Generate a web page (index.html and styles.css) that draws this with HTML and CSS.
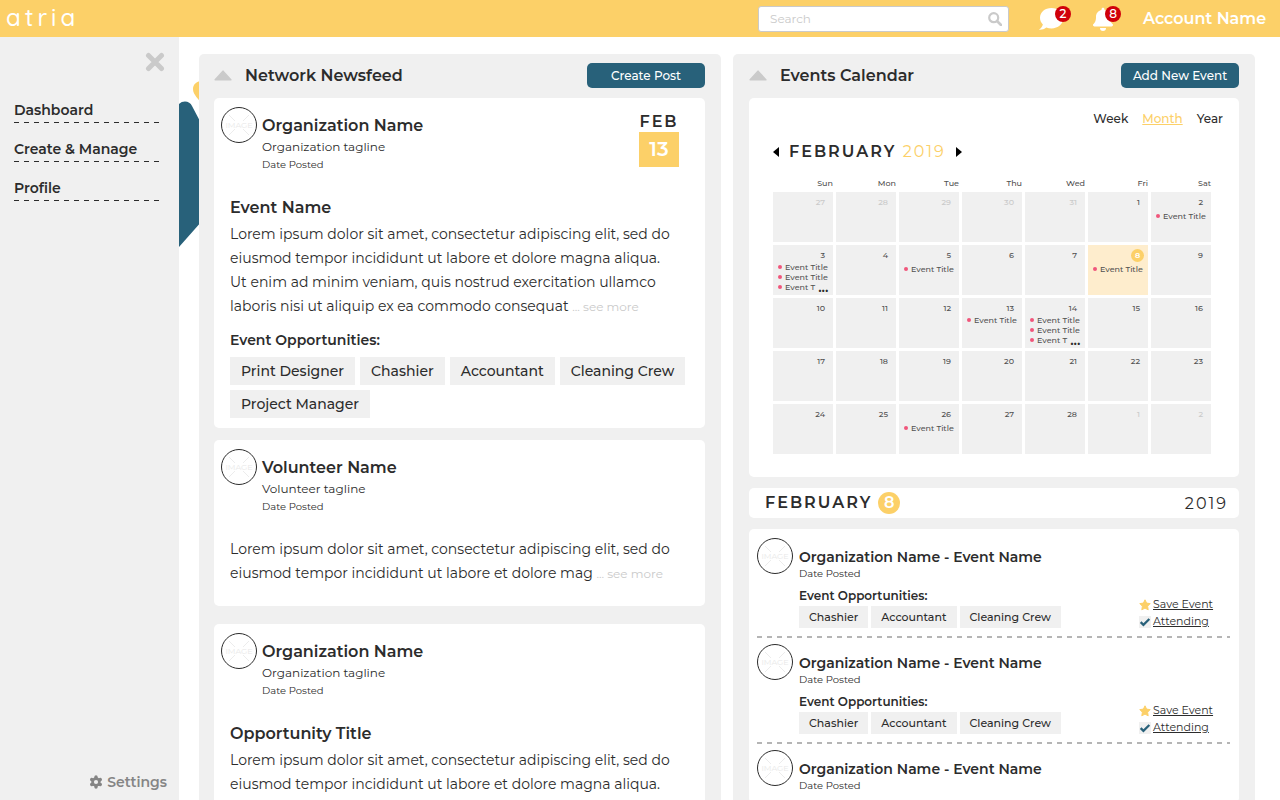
FILE: index.html
```html
<!DOCTYPE html>
<html lang="en">
<head>
<meta charset="utf-8">
<meta name="viewport" content="width=device-width, initial-scale=1">
<title>atria</title>
<link rel="stylesheet" href="styles.css">
</head>
<body>
<svg class="defs" aria-hidden="true">
  <symbol id="cross" viewBox="0 0 34 34"><path d="M7 7l6 6M27 7l-6 6M7 27l6-6M27 27l-6-6" stroke="#ececec"/></symbol>
  <symbol id="star" viewBox="0 0 12 12"><path d="M6 .8l1.6 3.300 3.600.5-2.600 2.600.6 3.600L6 9.100l-3.200 1.700.6-3.600L.8 4.600l3.600-.5z" fill="#fcd068" stroke="#fcd068" stroke-linejoin="round"/></symbol>
  <symbol id="check" viewBox="0 0 13 13"><path d="M0 0h13v13H0z" fill="#f0f0f0"/><path d="M1.800 6.600l3 3L11.200 3.200" fill="none" stroke="#28617a" stroke-width="2.400"/></symbol>
  <symbol id="triangle" viewBox="0 0 18 11"><path d="M9 1.200L16.800 9.800H1.200z" fill="#cacaca" stroke="#cacaca" stroke-width="1.600" stroke-linejoin="round"/></symbol>
</svg>

<header class="topbar">
  <a class="logo" href="#">atria</a>
  <form class="search">
    <input type="search" placeholder="Search" aria-label="Search">
    <button type="submit" aria-label="Submit search">
      <svg width="14" height="14" viewBox="0 0 14 14"><circle cx="5.700" cy="5.700" r="4.500" fill="none" stroke="#cacaca" stroke-width="2.200"/><path d="M9 9l4 4" stroke="#cacaca" stroke-width="2.600" stroke-linecap="round"/></svg>
    </button>
  </form>
  <button class="notice" aria-label="Messages">
    <svg width="26" height="24" viewBox="0 0 26 24"><path d="M13.500 1C7 1 2 5.200 2 10.800c0 2.600 1.100 4.900 2.900 6.700C4.300 19.700 2.800 21.600.9 22.700c2.600.2 5.300-.4 7.400-2.200 1.600.6 3.400.9 5.200.9C20 21.400 25.200 17 25.200 11S20 1 13.500 1z" fill="#fff"/></svg>
    <span class="badge">2</span>
  </button>
  <button class="notice" aria-label="Notifications">
    <svg width="22" height="24" viewBox="0 0 22 24"><path d="M11 .8c-.9 0-1.500.7-1.500 1.500v.8C6.200 3.800 4 6.500 4 9.900c0 4.200-1.300 5.900-2.600 7.200-.9 1-.3 2.300.9 2.300h17.400c1.200 0 1.800-1.300.9-2.300-1.300-1.300-2.600-3-2.600-7.200 0-3.400-2.200-6.100-5.500-6.800v-.8c0-.8-.6-1.500-1.500-1.500zM8 20.900a3 3 0 0 0 6 0z" fill="#fff"/></svg>
    <span class="badge">8</span>
  </button>
  <a class="account" href="#">Account Name</a>
</header>

<div class="layout">
  <nav class="sidebar">
    <button class="close" aria-label="Close menu">
      <svg width="20" height="20" viewBox="0 0 20 20"><path d="M3.500 3.500l13 13M16.500 3.500l-13 13" stroke="#cacaca" stroke-width="5" stroke-linecap="round"/></svg>
    </button>
    <a class="nav-link" href="#">Dashboard</a>
    <a class="nav-link" href="#">Create &amp; Manage</a>
    <a class="nav-link" href="#">Profile</a>
    <a class="settings" href="#">
      <svg width="14" height="14" viewBox="0 0 14 14"><path d="M7 2v10M2.700 4.500l8.600 5M2.700 9.500l8.600-5" stroke="#858585" stroke-width="3.400" stroke-linecap="round"/><circle cx="7" cy="7" r="4.700" fill="#858585"/><circle cx="7" cy="7" r="2.100" fill="#f0f0f0"/></svg>
      Settings
    </a>
  </nav>

  <main class="main">
    <svg class="backdrop" width="40" height="180" viewBox="0 0 40 180" aria-hidden="true">
      <path d="M23 1c-5 0-9 3-9 8 0 6 6 10 9 15h17V1z" fill="#fcd068"/>
      <path d="M0 24c4-4 11-3 13 2l10 19v96L0 167z" fill="#28617a"/>
    </svg>

    <section class="panel">
      <header class="panel-head">
        <svg width="18" height="11"><use href="#triangle"/></svg>
        <h2>Network Newsfeed</h2>
        <button class="action">Create Post</button>
      </header>

      <article class="card post">
        <div class="post-head">
          <div class="avatar"><svg width="34" height="34"><use href="#cross"/></svg><span>IMAGE</span></div>
          <div class="who">
            <h3>Organization Name</h3>
            <p class="tagline">Organization tagline</p>
            <p class="posted">Date Posted</p>
          </div>
          <div class="date"><span class="date-month">FEB</span><span class="date-day">13</span></div>
        </div>
        <div class="post-body">
          <h4>Event Name</h4>
          <p>Lorem ipsum dolor sit amet, consectetur adipiscing elit, sed do<br>eiusmod tempor incididunt ut labore et dolore magna aliqua.<br>Ut enim ad minim veniam, quis nostrud exercitation ullamco<br>laboris nisi ut aliquip ex ea commodo consequat <a class="more" href="#">... see more</a></p>
          <h5>Event Opportunities:</h5>
          <ul class="tags">
            <li>Print Designer</li><li>Chashier</li><li>Accountant</li><li>Cleaning Crew</li><li>Project Manager</li>
          </ul>
        </div>
      </article>

      <article class="card post post-short">
        <div class="post-head">
          <div class="avatar"><svg width="34" height="34"><use href="#cross"/></svg><span>IMAGE</span></div>
          <div class="who">
            <h3>Volunteer Name</h3>
            <p class="tagline">Volunteer tagline</p>
            <p class="posted">Date Posted</p>
          </div>
        </div>
        <div class="post-body">
          <p>Lorem ipsum dolor sit amet, consectetur adipiscing elit, sed do<br>eiusmod tempor incididunt ut labore et dolore mag <a class="more" href="#">... see more</a></p>
        </div>
      </article>

      <article class="card post">
        <div class="post-head">
          <div class="avatar"><svg width="34" height="34"><use href="#cross"/></svg><span>IMAGE</span></div>
          <div class="who">
            <h3>Organization Name</h3>
            <p class="tagline">Organization tagline</p>
            <p class="posted">Date Posted</p>
          </div>
        </div>
        <div class="post-body">
          <h4>Opportunity Title</h4>
          <p>Lorem ipsum dolor sit amet, consectetur adipiscing elit, sed do<br>eiusmod tempor incididunt ut labore et dolore magna aliqua.</p>
        </div>
      </article>
    </section>

    <section class="panel">
      <header class="panel-head">
        <svg width="18" height="11"><use href="#triangle"/></svg>
        <h2>Events Calendar</h2>
        <button class="action">Add New Event</button>
      </header>

      <div class="card calendar">
        <div class="views">
          <button>Week</button><button class="current">Month</button><button>Year</button>
        </div>
        <div class="month">
          <button aria-label="Previous month"><svg width="6" height="10" viewBox="0 0 6 10"><path d="M6 0v10L0 5z"/></svg></button>
          <h3>FEBRUARY <span>2019</span></h3>
          <button aria-label="Next month"><svg width="6" height="10" viewBox="0 0 6 10"><path d="M0 0v10l6-5z"/></svg></button>
        </div>
        <table>
          <thead><tr><th>Sun</th><th>Mon</th><th>Tue</th><th>Thu</th><th>Wed</th><th>Fri</th><th>Sat</th></tr></thead>
          <tbody>
            <tr>
              <td class="other"><span class="num">27</span></td><td class="other"><span class="num">28</span></td><td class="other"><span class="num">29</span></td><td class="other"><span class="num">30</span></td><td class="other"><span class="num">31</span></td>
              <td><span class="num">1</span></td>
              <td><span class="num">2</span><ul><li>Event Title</li></ul></td>
            </tr>
            <tr>
              <td><span class="num">3</span><ul class="tight"><li>Event Title</li><li>Event Title</li><li>Event T<b>...</b></li></ul></td>
              <td><span class="num">4</span></td>
              <td><span class="num">5</span><ul><li>Event Title</li></ul></td>
              <td><span class="num">6</span></td><td><span class="num">7</span></td>
              <td class="today"><span class="num">8</span><ul><li>Event Title</li></ul></td>
              <td><span class="num">9</span></td>
            </tr>
            <tr>
              <td><span class="num">10</span></td><td><span class="num">11</span></td><td><span class="num">12</span></td>
              <td><span class="num">13</span><ul class="tight"><li>Event Title</li></ul></td>
              <td><span class="num">14</span><ul class="tight"><li>Event Title</li><li>Event Title</li><li>Event T<b>...</b></li></ul></td>
              <td><span class="num">15</span></td><td><span class="num">16</span></td>
            </tr>
            <tr>
              <td><span class="num">17</span></td><td><span class="num">18</span></td><td><span class="num">19</span></td><td><span class="num">20</span></td><td><span class="num">21</span></td><td><span class="num">22</span></td><td><span class="num">23</span></td>
            </tr>
            <tr>
              <td><span class="num">24</span></td><td><span class="num">25</span></td>
              <td><span class="num">26</span><ul><li>Event Title</li></ul></td>
              <td><span class="num">27</span></td><td><span class="num">28</span></td>
              <td class="other"><span class="num">1</span></td><td class="other"><span class="num">2</span></td>
            </tr>
          </tbody>
        </table>
      </div>

      <div class="card daybar">
        <h3>FEBRUARY</h3><span class="day">8</span><span class="year">2019</span>
      </div>

      <div class="card events">
        <article class="event">
          <div class="avatar"><svg width="34" height="34"><use href="#cross"/></svg><span>IMAGE</span></div>
          <div class="event-info">
            <h4>Organization Name - Event Name</h4>
            <p class="posted">Date Posted</p>
            <h5>Event Opportunities:</h5>
            <ul class="tags tags-small"><li>Chashier</li><li>Accountant</li><li>Cleaning Crew</li></ul>
          </div>
          <div class="event-links">
            <a href="#"><svg width="12" height="12"><use href="#star"/></svg><span>Save Event</span></a>
            <a href="#"><svg width="12" height="12"><use href="#check"/></svg><span>Attending</span></a>
          </div>
        </article>
        <article class="event">
          <div class="avatar"><svg width="34" height="34"><use href="#cross"/></svg><span>IMAGE</span></div>
          <div class="event-info">
            <h4>Organization Name - Event Name</h4>
            <p class="posted">Date Posted</p>
            <h5>Event Opportunities:</h5>
            <ul class="tags tags-small"><li>Chashier</li><li>Accountant</li><li>Cleaning Crew</li></ul>
          </div>
          <div class="event-links">
            <a href="#"><svg width="12" height="12"><use href="#star"/></svg><span>Save Event</span></a>
            <a href="#"><svg width="12" height="12"><use href="#check"/></svg><span>Attending</span></a>
          </div>
        </article>
        <article class="event">
          <div class="avatar"><svg width="34" height="34"><use href="#cross"/></svg><span>IMAGE</span></div>
          <div class="event-info">
            <h4>Organization Name - Event Name</h4>
            <p class="posted">Date Posted</p>
          </div>
        </article>
      </div>
    </section>
  </main>
</div>
</body>
</html>
```
FILE: styles.css
```css
* { box-sizing: border-box; }
h2, h3, h4, h5, p, ul { margin: 0; padding: 0; font-weight: 600; }
p, ul { font-weight: 400; }
ul { list-style: none; }
a { color: inherit; text-decoration: none; }
button { border: 0; padding: 0; background: none; color: inherit; font: inherit; cursor: pointer; }
svg { display: block; flex: none; }

body {
  margin: 0;
  height: 100vh;
  display: flex;
  flex-direction: column;
  overflow: hidden;
  background: #fff;
  color: #2c2c2c;
  font-family: Montserrat, Inter, "Open Sans", sans-serif;
}
.defs { position: absolute; width: 0; height: 0; }
.avatar {
  flex: none;
  display: grid;
  place-items: center;
  width: 36px;
  height: 36px;
  border: 1px solid #2c2c2c;
  border-radius: 50%;
  color: #e8e8e8;
  font-size: 8px;
  line-height: 10px;
}
.avatar > * { grid-area: 1 / 1; }

/* Top bar */
.topbar {
  flex: none;
  display: flex;
  align-items: center;
  height: 37px;
  padding: 0 11px 0 6px;
  background: #fcd068;
  color: #fff;
}
.logo { padding-bottom: 3px; font: 500 24px/32px Quicksand, Lato, sans-serif; letter-spacing: 4px; }
.search {
  display: flex;
  align-items: center;
  width: 251px;
  height: 26px;
  margin: 0 29px 0 auto;
  padding: 0 6px 0 11px;
  border: 1px solid #cacaca;
  border-radius: 3px;
  background: #fff;
}
.search input {
  flex: 1;
  min-width: 0;
  border: 0;
  padding: 0;
  outline: 0;
  background: none;
  font: 400 12px/20px Montserrat, Inter, sans-serif;
}
.search input::placeholder { color: #cacaca; }
.notice { position: relative; margin-right: 28px; }
.notice + .notice { margin-right: 29px; }
.badge {
  position: absolute;
  top: -1px;
  right: -7px;
  width: 16px;
  height: 16px;
  border-radius: 50%;
  background: #d0000a;
  font-size: 12px;
  font-weight: 500;
  line-height: 16px;
  text-align: center;
}
.account { min-width: 126px; font-size: 16px; font-weight: 600; }

/* Sidebar */
.layout { flex: 1; min-height: 0; display: flex; }
.sidebar {
  flex: none;
  display: flex;
  flex-direction: column;
  width: 179px;
  padding: 15px 12px 8px 14px;
  background: #f0f0f0;
}
.close { align-self: flex-end; margin: 0 2px 28px 0; }
.nav-link {
  height: 23px;
  margin: 0 7px 16px 0;
  background: repeating-linear-gradient(90deg, #2c2c2c 0 5px, transparent 5px 10px) left bottom / 100% 1px no-repeat;
  font-size: 14px;
  font-weight: 600;
  line-height: 20px;
}
.settings {
  display: flex;
  align-items: center;
  justify-content: flex-end;
  gap: 4px;
  margin-top: auto;
  color: #858585;
  font-size: 14px;
  font-weight: 600;
  line-height: 20px;
}

/* Panels */
.main {
  position: relative;
  z-index: 0;
  flex: 1;
  min-width: 0;
  display: grid;
  grid-template-columns: 1fr 1fr;
  gap: 12px;
  padding: 17px 25px 0 20px;
}
.backdrop { position: absolute; left: 0; top: 43px; z-index: -1; }
.panel {
  display: flex;
  flex-direction: column;
  min-width: 0;
  overflow: hidden;
  padding: 0 16px 0 15px;
  border-radius: 5px 5px 0 0;
  background: #f0f0f0;
}
.panel + .panel { padding-left: 16px; }
.panel-head { flex: none; display: flex; align-items: center; gap: 13px; height: 44px; padding-bottom: 1px; }
.panel-head h2 { font-size: 16px; line-height: 24px; }
.action {
  width: 118px;
  height: 25px;
  margin-left: auto;
  border-radius: 5px;
  background: #28617a;
  color: #fff;
  font-size: 12px;
  font-weight: 500;
}
.card { flex: none; border-radius: 5px; background: #fff; }

/* Newsfeed */
.post { margin-bottom: 12px; padding: 9px 16px 10px 7px; }
.post-short { margin-bottom: 18px; padding-bottom: 21px; }
.post-head { display: flex; gap: 5px; }
.who { flex: 1; padding-top: 8px; }
.who h3 { font-size: 16px; line-height: 22px; }
.tagline { font-size: 12px; line-height: 20px; }
.posted { font-size: 10px; line-height: 14px; }
.who .posted { padding-top: 1px; }
.date { width: 40px; margin: 5px 10px 0 0; text-align: center; }
.date span { display: block; font-weight: 600; }
.date-month { font-size: 16px; line-height: 20px; letter-spacing: 2px; }
.date-day { background: #fcd068; color: #fff; font-size: 20px; line-height: 35px; }
.post-body { margin-top: 23px; padding-left: 9px; }
.post-body h4 { padding-top: 1px; margin-bottom: 2px; font-size: 16px; line-height: 24px; }
.post-body p { font-size: 14px; line-height: 24px; white-space: nowrap; }
.post-body h5 { margin: 12px 0 7px; font-size: 14px; line-height: 20px; }
.more { color: #cacaca; font-size: 12px; line-height: 16px; }
.tags { display: flex; flex-wrap: wrap; gap: 5px; }
.tags li { padding: 0 11px; background: #f0f0f0; font-size: 14px; font-weight: 500; line-height: 28px; }

/* Calendar */
.calendar { margin-bottom: 11px; padding: 13px 16px 20px 21px; }
.views { display: flex; justify-content: flex-end; gap: 14px; font-size: 12px; font-weight: 500; line-height: 16px; }
.current { color: #fcd068; text-decoration: underline; }
.month { display: flex; align-items: center; gap: 10px; margin: 13px 0 11px 3px; }
.month h3 { font-size: 16px; line-height: 24px; letter-spacing: 2px; }
.month span { color: #fcd068; font-weight: 400; }
.calendar table {
  width: calc(100% - 9px);
  table-layout: fixed;
  border-collapse: separate;
  border-spacing: 3px;
  color: #505050;
  font-size: 8px;
}
.calendar th { height: 11px; padding: 0; font-weight: 500; line-height: 11px; text-align: right; }
.calendar td { height: 50px; padding: 4px 4px 0 5px; background: #f0f0f0; vertical-align: top; }
.num { display: block; width: fit-content; height: 13px; margin: 0 4px 0 auto; font-size: 8px; font-weight: 500; line-height: 13px; text-align: center; }
.calendar .other { color: #cacaca; }
.calendar td.today { background: #feedcd; }
.today .num { width: 13px; margin-right: 0; border-radius: 50%; background: #fcd068; color: #fff; font-weight: 600; }
.calendar ul { margin-top: 2px; }
.calendar ul.tight { margin-top: 0; }
.calendar li { display: flex; align-items: center; gap: 3px; height: 10px; font-weight: 500; line-height: 10px; white-space: nowrap; }
.calendar li::before { content: ""; width: 4px; height: 4px; border-radius: 50%; background: #f0567b; }
.calendar b { color: #2c2c2c; font-size: 14px; font-weight: 600; line-height: 10px; }

/* Selected day */
.daybar { display: flex; align-items: center; gap: 6px; height: 30px; margin-bottom: 11px; padding: 0 11px 0 16px; }
.daybar h3 { font-size: 16px; line-height: 24px; letter-spacing: 2px; }
.day { width: 22px; height: 22px; border-radius: 50%; background: #fcd068; color: #fff; font-size: 16px; font-weight: 600; line-height: 22px; text-align: center; }
.year { margin-left: auto; font-size: 16px; letter-spacing: 2px; }

.events { padding: 3px 9px 0 8px; }
.event {
  display: flex;
  gap: 6px;
  padding: 6px 0 8px;
  background: repeating-linear-gradient(90deg, #b5b5b5 0 5px, transparent 5px 10px) left bottom / 100% 2px no-repeat;
}
.event-info { flex: 1; padding: 9px 0 2px; }
.event h4 { font-size: 14px; line-height: 20px; }
.event h5 { margin: 7px 0 2px; font-size: 12px; line-height: 16px; }
.tags-small { gap: 3px; }
.tags-small li { padding: 0 10px; font-size: 11px; line-height: 22px; }
.event-links { align-self: flex-end; width: 76px; margin-right: 15px; font-size: 11px; line-height: 17px; }
.event-links a { display: flex; align-items: center; gap: 2px; white-space: nowrap; }
.event-links span { text-decoration: underline; }
```
